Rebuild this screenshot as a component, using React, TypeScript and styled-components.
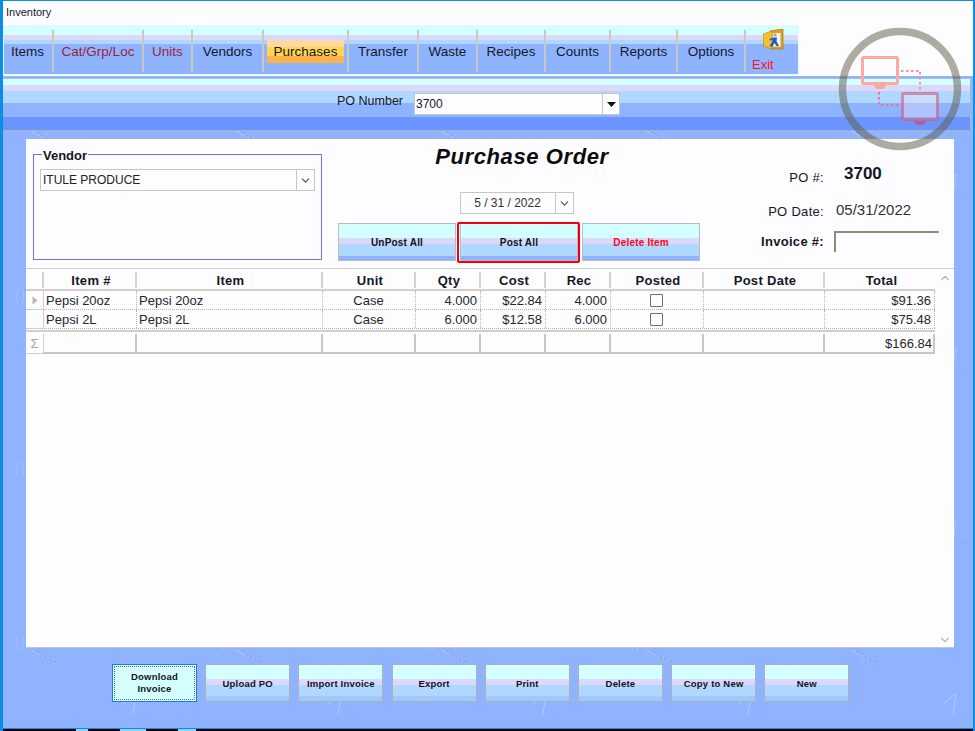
import { ChevronDown, ChevronUp } from "lucide-react";
import styled, { createGlobalStyle } from "styled-components";

const tabs = [
  { label: "Items", width: 51 },
  { label: "Cat/Grp/Loc", width: 90, red: true },
  { label: "Units", width: 49, red: true },
  { label: "Vendors", width: 71 },
  { label: "Purchases", width: 85, active: true },
  { label: "Transfer", width: 70 },
  { label: "Waste", width: 59 },
  { label: "Recipes", width: 68 },
  { label: "Counts", width: 65 },
  { label: "Reports", width: 67 },
  { label: "Options", width: 68 },
];

const columns = "18px 93px 186px 93px 65px 65px 65px 93px 121px 110px";

const headers = ["", "Item #", "Item", "Unit", "Qty", "Cost", "Rec", "Posted", "Post Date", "Total"];

const rows = [
  { no: "Pepsi 20oz", item: "Pepsi 20oz", unit: "Case", qty: "4.000", cost: "$22.84", rec: "4.000", total: "$91.36", current: true },
  { no: "Pepsi 2L", item: "Pepsi 2L", unit: "Case", qty: "6.000", cost: "$12.58", rec: "6.000", total: "$75.48" },
];

const footerButtons = ["Upload PO", "Import Invoice", "Export", "Print", "Delete", "Copy to New", "New"];

export default function App() {
  return (
    <>
      <GlobalStyle />
      <Win>
        <Wallpaper aria-hidden="true">
          <defs>
            <pattern id="marks" width="205" height="173" patternUnits="userSpaceOnUse">
              <path d="M31 131 Q42 137 55 142" fill="none" stroke="#b4c8ff" strokeWidth="1" />
              <path d="M36 132 Q46 139 57 143" fill="none" stroke="#7f92c8" strokeWidth="1" strokeDasharray="3 2" />
              <path d="M123 12 L135 2 M136 2 L133 22" fill="none" stroke="#b4c8ff" strokeWidth="1" />
              <path d="M140 24 L150 24" stroke="#a0a4f0" strokeWidth="1" />
              <path d="M18 116 Q15 123 18 132 M23 116 Q25 123 22 132" fill="none" stroke="#a8bdf8" strokeWidth="1" />
            </pattern>
          </defs>
          <rect width="975" height="731" fill="url(#marks)" />
        </Wallpaper>

        <Header>
          <TitleBar>Inventory</TitleBar>
          <TabBar>
            {tabs.map((t) => (
              <Tab key={t.label} $width={t.width}>
                <TabLabel $red={t.red} $active={t.active}>{t.label}</TabLabel>
              </Tab>
            ))}
            <ExitTab>
              <ExitIcon />
              <ExitLabel>Exit</ExitLabel>
            </ExitTab>
          </TabBar>
        </Header>

        <Toolbar>
          <PoLabel>PO Number</PoLabel>
          <PoCombo>
            <PoValue>3700</PoValue>
            <PoArrow />
          </PoCombo>
        </Toolbar>

        <Main>
          <Panel>
            <TopArea>
              <VendorBox>
                <VendorLegend>Vendor</VendorLegend>
                <VendorCombo>
                  <span>ITULE PRODUCE</span>
                  <ComboDrop>
                    <ChevronDown size={13} strokeWidth={2} />
                  </ComboDrop>
                </VendorCombo>
              </VendorBox>

              <CenterCol>
                <PageTitle>Purchase Order</PageTitle>
                <DatePicker>
                  <DateValue>5 / 31 / 2022</DateValue>
                  <ComboDrop>
                    <ChevronDown size={13} strokeWidth={2} />
                  </ComboDrop>
                </DatePicker>
                <ActionRow>
                  <ActionButton>UnPost All</ActionButton>
                  <ActionButton $highlight>Post All</ActionButton>
                  <ActionButton $danger>Delete Item</ActionButton>
                </ActionRow>
              </CenterCol>

              <InfoCol>
                <InfoLabel $top={31}>PO #:</InfoLabel>
                <PoBig>3700</PoBig>
                <InfoLabel $top={18}>PO Date:</InfoLabel>
                <InfoValue>05/31/2022</InfoValue>
                <InfoLabel $top={14} $bold>Invoice #:</InfoLabel>
                <InvoiceInput />
              </InfoCol>
            </TopArea>

            <GridArea>
              <GridWrap>
                <HeaderRow>
                  {headers.map((h, i) => (
                    <HeaderCell key={i}>{h}</HeaderCell>
                  ))}
                </HeaderRow>
                {rows.map((r) => (
                  <DataRow key={r.no}>
                    <IndicatorCell>{r.current && <RowArrow />}</IndicatorCell>
                    <Cell>{r.no}</Cell>
                    <Cell>{r.item}</Cell>
                    <Cell $align="center">{r.unit}</Cell>
                    <Cell $align="right">{r.qty}</Cell>
                    <Cell $align="right">{r.cost}</Cell>
                    <Cell $align="right">{r.rec}</Cell>
                    <Cell $align="center"><CheckBox /></Cell>
                    <Cell />
                    <Cell $align="right">{r.total}</Cell>
                  </DataRow>
                ))}
                <SummaryRow>
                  <SigmaCell>Σ</SigmaCell>
                  <SummaryCell />
                  <SummaryCell />
                  <SummaryCell />
                  <SummaryCell />
                  <SummaryCell />
                  <SummaryCell />
                  <SummaryCell />
                  <SummaryCell />
                  <SummaryCell>$166.84</SummaryCell>
                </SummaryRow>
              </GridWrap>
              <ScrollCol>
                <ChevronUp size={14} strokeWidth={2} />
                <ChevronDown size={14} strokeWidth={2} />
              </ScrollCol>
            </GridArea>
          </Panel>
        </Main>

        <FooterBar>
          <FooterButton $focused>
            <FocusBox>Download Invoice</FocusBox>
          </FooterButton>
          {footerButtons.map((b) => (
            <FooterButton key={b}>{b}</FooterButton>
          ))}
        </FooterBar>

        <Taskbar>
          <TaskItem $width={12} />
          <TaskItem $width={26} />
          <TaskItem $width={18} />
        </Taskbar>

        <RemoteLogo />
      </Win>
    </>
  );
}

function PoArrow() {
  return (
    <PoArrowBox>
      <svg width="9" height="5" viewBox="0 0 9 5">
        <path d="M0 0H9L4.5 5Z" fill="#111" />
      </svg>
    </PoArrowBox>
  );
}

function RowArrow() {
  return (
    <svg width="6" height="9" viewBox="0 0 6 9">
      <path d="M0.5 0.5L5.5 4.5L0.5 8.5Z" fill="#b8b8b0" />
    </svg>
  );
}

function ExitIcon() {
  return (
    <ExitSvg width="21" height="21" viewBox="0 0 21 21">
      <path d="M7 2L20 0V20L7 20Z" fill="#e89c10" stroke="#a87810" strokeWidth="0.7" />
      <path d="M9.5 4H17.5V17.5H9.5Z" fill="#f0f8ff" />
      <path d="M0.5 5L9 2V20L0.5 17Z" fill="#f4c030" stroke="#b88c18" strokeWidth="0.7" />
      <circle cx="12" cy="6" r="1.7" fill="#d8a078" />
      <path d="M10.5 8.5L14 8.5L13.5 12.5L16 17H13.5L11.5 14L9 18L6.5 17L9.5 12.5L9.5 10.5L7 11.5L6.5 10Z" fill="#1a5cc8" />
    </ExitSvg>
  );
}

function RemoteLogo() {
  return (
    <LogoSvg width="124" height="124" viewBox="0 0 124 124">
      <circle cx="62" cy="62" r="57.5" fill="none" stroke="#5c5c48" strokeOpacity="0.5" strokeWidth="7.5" />
      <rect x="24.5" y="30.5" width="35" height="26" rx="1" fill="none" stroke="#ffa8a0" strokeWidth="3" />
      <path d="M36 58H48L46 62H38Z" fill="#f8a8a0" />
      <rect x="64.5" y="66.5" width="35" height="26" rx="1" fill="#ffe8f4" fillOpacity="0.3" stroke="#d05878" strokeOpacity="0.6" strokeWidth="3" />
      <path d="M76 94H88L86 98H78Z" fill="#b060a0" />
      <path d="M63 44H82V64" fill="none" stroke="#f89098" strokeWidth="2" strokeDasharray="2.5 2.5" />
      <path d="M41 65V78H62" fill="none" stroke="#f070a0" strokeWidth="2" strokeDasharray="2.5 2.5" />
    </LogoSvg>
  );
}

const GlobalStyle = createGlobalStyle`
  html, body {
    margin: 0;
    padding: 0;
    background: #8fb3ff;
  }
  * {
    box-sizing: border-box;
  }
`;

const Win = styled.div`
  position: relative;
  display: flex;
  flex-direction: column;
  width: 975px;
  height: 731px;
  overflow: hidden;
  background: #8fb3ff;
  border-top: 1px solid #0b8de8;
  border-left: 3px solid #0b8de8;
  border-right: 2px solid #0b8de8;
  font-family: "Liberation Sans", Arial, sans-serif;
  color: #14161f;
`;

const Wallpaper = styled.svg`
  position: absolute;
  left: -3px;
  top: -1px;
  width: 975px;
  height: 731px;
`;

const Header = styled.div`
  position: relative;
  flex: none;
  height: 75px;
  background: #fdfdff;
`;

const TitleBar = styled.div`
  height: 24px;
  padding: 5px 0 0 3px;
  font-size: 11px;
`;

const TabBar = styled.div`
  display: flex;
  width: 796px;
  height: 50px;
  padding-top: 5px;
  border-radius: 0 0 2px 2px;
  background: linear-gradient(
    #d4ffff 0 10px,
    #dcd8fb 10px 15px,
    #b0d8ff 15px 19px,
    #8fb4ff 19px
  );
  box-shadow: inset 0 0 0 1px #e4f8ff;
`;

const Tab = styled.div<{ $width: number }>`
  flex: none;
  display: flex;
  align-items: center;
  justify-content: center;
  width: ${(p) => p.$width}px;
  height: 42px;
  border-right: 2px solid #c8c8c4;
`;

const TabLabel = styled.span<{ $red?: boolean; $active?: boolean }>`
  display: flex;
  align-items: center;
  height: 23px;
  padding: 1px ${(p) => (p.$active ? "7px" : "0")} 0;
  font-size: 13.5px;
  line-height: 16px;
  color: ${(p) => (p.$red ? "#a01c34" : "#141824")};
  background: ${(p) =>
    p.$active
      ? "linear-gradient(#ffd9a0 0 7px, #ffd552 7px 16px, #ffb24a 16px)"
      : "none"};
`;

const ExitTab = styled.div`
  flex: 1;
  display: flex;
  flex-direction: column;
  align-items: flex-start;
  padding-left: 6px;
  margin-top: -1px;
`;

const ExitSvg = styled.svg`
  margin-left: 11px;
`;

const ExitLabel = styled.span`
  margin-top: 7px;
  font-size: 13px;
  line-height: 15px;
  color: #ff1020;
`;

const Toolbar = styled.div`
  position: relative;
  flex: none;
  display: flex;
  align-items: flex-start;
  height: 53px;
  margin: 2px 2px 0 0;
  padding: 14px 0 0 334px;
  border-top: 1px solid #b0bcd0;
  border-right: 1px solid #b0b4b8;
  border-bottom: 1px solid #a8b0c4;
  background: linear-gradient(
    #d4ffff 0 6px,
    #dcd8fb 6px 12px,
    #b0d8ff 12px 24px,
    #8fb4ff 24px 38px,
    #6b94ff 38px
  );
`;

const PoLabel = styled.span`
  font-size: 12.5px;
  line-height: 16px;
`;

const PoCombo = styled.div`
  display: flex;
  align-items: center;
  justify-content: space-between;
  width: 206px;
  height: 22px;
  margin: 0 0 0 11px;
  border: 1px solid #c8c8c0;
  background: #fdfdff;
  font-size: 12px;
`;

const PoValue = styled.span`
  padding-left: 1px;
`;

const PoArrowBox = styled.div`
  display: flex;
  align-items: center;
  justify-content: center;
  width: 17px;
  height: 100%;
  border-left: 1px solid #c8c8c0;
`;

const Main = styled.div`
  position: relative;
  flex: 1;
  display: flex;
  min-height: 0;
  padding: 8px 19px 0 23px;
`;

const Panel = styled.div`
  flex: 1;
  display: flex;
  flex-direction: column;
  background: #fdfdff;
  border-bottom: 1px solid #c8c4b8;
`;

const TopArea = styled.div`
  flex: none;
  display: flex;
  height: 130px;
  border-bottom: 1px solid #d0cfc8;
`;

const VendorBox = styled.fieldset`
  flex: none;
  width: 289px;
  height: 114px;
  margin: 7px 0 0 7px;
  padding: 0 6px;
  border: 1px solid #7470f4;
`;

const VendorLegend = styled.legend`
  margin-left: 2px;
  padding: 2px 1px 0;
  font-size: 13px;
  font-weight: bold;
  line-height: 15px;
`;

const VendorCombo = styled.div`
  display: flex;
  align-items: center;
  justify-content: space-between;
  width: 275px;
  height: 22px;
  margin-top: 6px;
  padding-left: 2px;
  border: 1px solid #c8c8bc;
  font-size: 12px;
  color: #222;
`;

const ComboDrop = styled.div`
  flex: none;
  display: flex;
  align-items: center;
  justify-content: center;
  width: 18px;
  height: 100%;
  border-left: 1px solid #c8c8bc;
  color: #4a4a80;
`;

const CenterCol = styled.div`
  flex: none;
  display: flex;
  flex-direction: column;
  align-items: center;
  width: 362px;
  margin-left: 16px;
`;

const PageTitle = styled.h1`
  margin: 5px 0 0 6px;
  font-size: 22px;
  font-style: italic;
  font-weight: bold;
  line-height: 25px;
  letter-spacing: 0.6px;
  color: #0c0c0c;
  white-space: nowrap;
`;

const DatePicker = styled.div`
  display: flex;
  align-items: center;
  width: 114px;
  height: 22px;
  margin: 23px 0 0 -5px;
  border: 1px solid #c8c8bc;
  font-size: 12px;
  color: #333;
`;

const DateValue = styled.span`
  flex: 1;
  text-align: center;
`;

const ActionRow = styled.div`
  display: flex;
  gap: 4px;
  margin-top: 9px;
`;

const ActionButton = styled.div<{ $highlight?: boolean; $danger?: boolean }>`
  position: relative;
  display: flex;
  align-items: center;
  justify-content: center;
  width: 118px;
  height: 38px;
  border: 1px solid #b8bcc0;
  background: linear-gradient(
    #d4ffff 0 14px,
    #dcd8fb 14px 20px,
    #b0d8ff 20px 32px,
    #8fb4ff 32px
  );
  font-size: 10px;
  font-weight: bold;
  letter-spacing: 0.2px;
  color: ${(p) => (p.$danger ? "#ff0818" : "#10121a")};
  ${(p) =>
    p.$highlight &&
    `
    &::after {
      content: "";
      position: absolute;
      inset: -2px -3px -3px -4px;
      border: 2px solid #f00010;
      border-radius: 2px;
    }
  `}
`;

const InfoCol = styled.div`
  flex: 1;
  display: grid;
  grid-template-columns: 124px 1fr;
  column-gap: 10px;
  align-content: start;
`;

const InfoLabel = styled.div<{ $top: number; $bold?: boolean }>`
  margin-top: ${(p) => p.$top}px;
  font-size: 13px;
  font-weight: ${(p) => (p.$bold ? "bold" : "normal")};
  letter-spacing: 0.3px;
  line-height: 16px;
  text-align: right;
  align-self: start;
`;

const PoBig = styled.div`
  margin: 25px 0 0 10px;
  font-size: 17px;
  font-weight: bold;
  line-height: 20px;
`;

const InfoValue = styled.div`
  margin: 15px 0 0 2px;
  font-size: 15px;
  line-height: 18px;
  color: #333;
`;

const InvoiceInput = styled.div`
  width: 105px;
  height: 21px;
  margin-top: 11px;
  border-top: 2px solid #8c8c78;
  border-left: 2px solid #8c8c78;
`;

const GridArea = styled.div`
  flex: 1;
  display: flex;
  min-height: 0;
`;

const GridWrap = styled.div`
  flex: none;
  width: 909px;
`;

const ScrollCol = styled.div`
  flex: 1;
  display: flex;
  flex-direction: column;
  align-items: center;
  justify-content: space-between;
  padding: 2px 0 0;
  color: #b8b8b0;
`;

const HeaderRow = styled.div`
  display: grid;
  grid-template-columns: ${columns};
  height: 22px;
  border-bottom: 2px solid #d0cfc8;
`;

const HeaderCell = styled.div`
  display: flex;
  align-items: center;
  justify-content: center;
  height: 16px;
  margin-top: 3px;
  padding-left: 3px;
  border-right: 2px solid #d4d4cc;
  font-size: 13px;
  font-weight: bold;
  letter-spacing: 0.3px;
  color: #14161f;
  &:last-child {
    border-right: none;
  }
`;

const DataRow = styled.div`
  display: grid;
  grid-template-columns: ${columns};
  height: 19px;
  border-bottom: 1px dotted #b4b4ac;
`;

const Cell = styled.div<{ $align?: string }>`
  display: flex;
  align-items: center;
  justify-content: ${(p) =>
    p.$align === "right" ? "flex-end" : p.$align === "center" ? "center" : "flex-start"};
  padding: 0 3px 0 2px;
  border-right: 1px dotted #b4b4ac;
  font-size: 13px;
  color: #26262a;
`;

const IndicatorCell = styled.div`
  display: flex;
  align-items: center;
  justify-content: center;
  border-right: 1px solid #d0cfc8;
  border-bottom: 1px solid #d0cfc8;
  margin-bottom: -1px;
`;

const CheckBox = styled.div`
  width: 13px;
  height: 13px;
  border: 1px solid #707070;
  border-radius: 1px;
  background: #fdfdff;
`;

const SummaryRow = styled.div`
  display: grid;
  grid-template-columns: ${columns};
  height: 24px;
  margin-top: 1px;
  padding-top: 2px;
  border-top: 2px solid #d0cfc8;
`;

const SigmaCell = styled.div`
  display: flex;
  align-items: center;
  justify-content: center;
  border-right: 1px solid #d0cfc8;
  border-bottom: 1px solid #d0cfc8;
  font-size: 13px;
  color: #a8a8a0;
`;

const SummaryCell = styled.div`
  display: flex;
  align-items: center;
  justify-content: flex-end;
  padding: 0 1px 0 3px;
  border-right: 2px solid #c8c8c0;
  border-bottom: 2px solid #c8c8c0;
  font-size: 13px;
  color: #26262a;
`;

const FooterBar = styled.div`
  position: relative;
  flex: none;
  display: flex;
  gap: 8.2px;
  height: 80px;
  padding: 16px 0 0 109px;
`;

const FooterButton = styled.div<{ $focused?: boolean }>`
  display: flex;
  align-items: center;
  justify-content: center;
  width: 85px;
  height: 38px;
  border: 1px solid ${(p) => (p.$focused ? "#1a78f0" : "#b0b0b0")};
  background: ${(p) =>
    p.$focused
      ? "#d4ffff"
      : "linear-gradient(#d4ffff 0 14px, #dcd8fb 14px 20px, #b0d8ff 20px 31px, #9ccaff 31px)"};
  font-size: 9.5px;
  font-weight: bold;
  letter-spacing: 0.2px;
  text-align: center;
  color: #10121a;
`;

const FocusBox = styled.div`
  display: flex;
  align-items: center;
  justify-content: center;
  width: 81px;
  height: 34px;
  padding: 0 18px;
  border: 1px dotted #6a6a5a;
  line-height: 12px;
`;

const Taskbar = styled.div`
  position: relative;
  flex: none;
  display: flex;
  gap: 32px;
  height: 3px;
  margin: 0 -2px 0 -3px;
  padding-left: 76px;
  border-top: 1px solid #0b8de8;
  background: #000;
`;

const TaskItem = styled.div<{ $width: number }>`
  width: ${(p) => p.$width}px;
  background: #8ad4ff;
`;

const LogoSvg = styled.svg`
  position: absolute;
  left: 835px;
  top: 26px;
`;
